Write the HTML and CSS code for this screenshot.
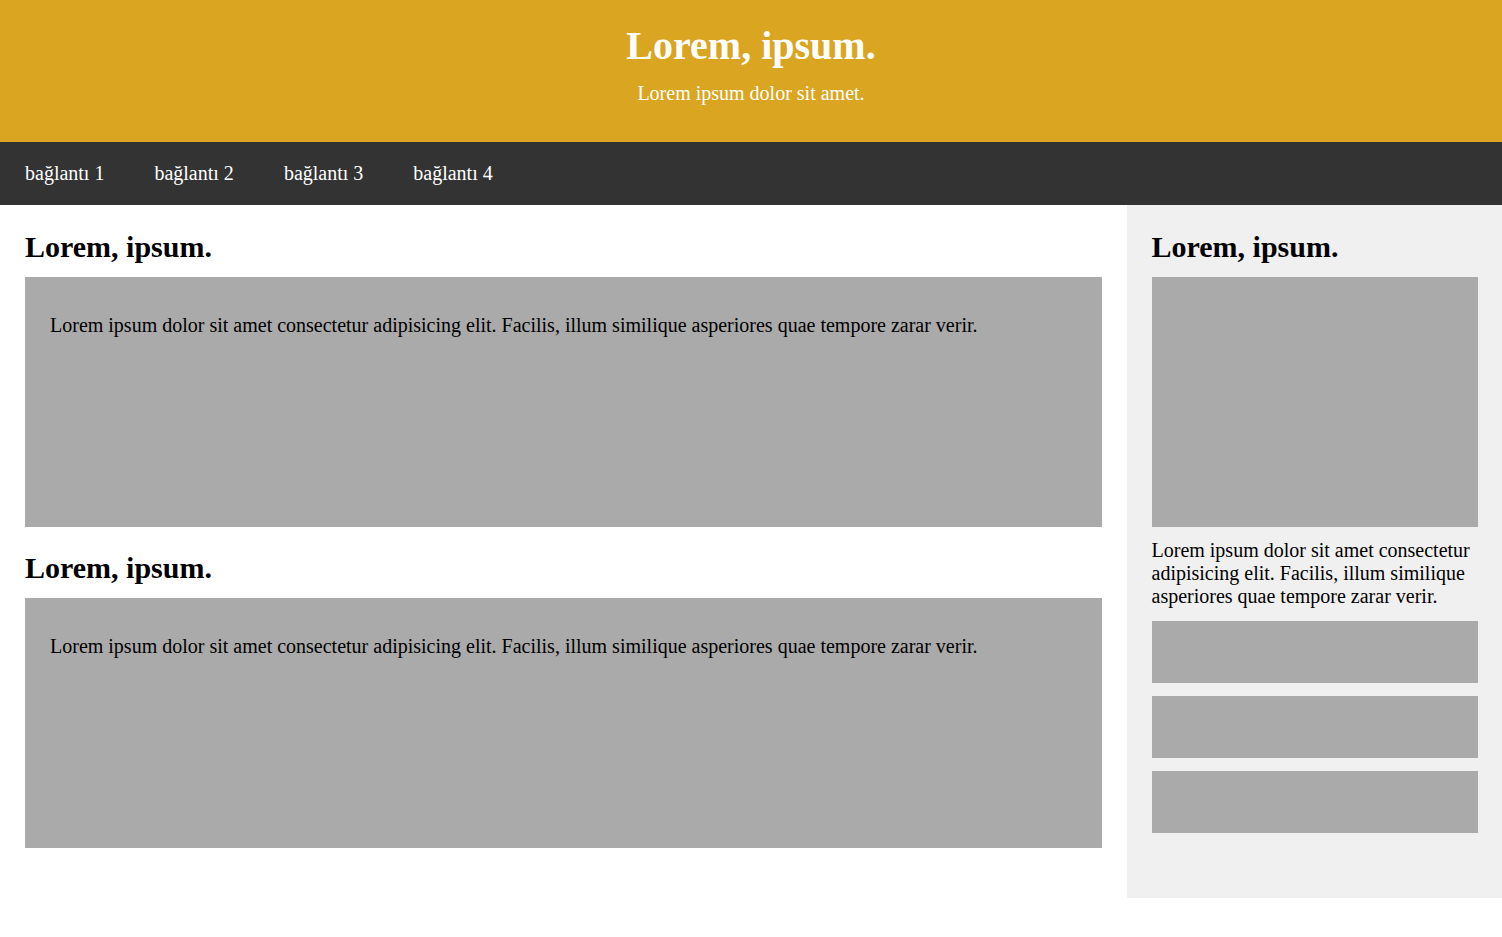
FILE: index.html
```html
<!DOCTYPE html>
<html lang="tr">
<head>
<meta charset="utf-8">
<title>Lorem, ipsum.</title>
<link rel="stylesheet" href="styles.css">
</head>
<body>
<header class="site-header">
  <h1 class="site-title">Lorem, ipsum.</h1>
  <p class="site-subtitle">Lorem ipsum dolor sit amet.</p>
</header>
<nav class="site-nav">
  <a href="#" class="nav-link">bağlantı 1</a>
  <a href="#" class="nav-link">bağlantı 2</a>
  <a href="#" class="nav-link">bağlantı 3</a>
  <a href="#" class="nav-link">bağlantı 4</a>
</nav>
<div class="layout">
  <main class="main-col">
    <section class="section">
      <h2 class="section-title">Lorem, ipsum.</h2>
      <div class="content-box">
        <p class="text">Lorem ipsum dolor sit amet consectetur adipisicing elit. Facilis, illum similique asperiores quae tempore zarar verir.</p>
      </div>
    </section>
    <section class="section">
      <h2 class="section-title">Lorem, ipsum.</h2>
      <div class="content-box">
        <p class="text">Lorem ipsum dolor sit amet consectetur adipisicing elit. Facilis, illum similique asperiores quae tempore zarar verir.</p>
      </div>
    </section>
  </main>
  <aside class="sidebar">
    <h2 class="section-title">Lorem, ipsum.</h2>
    <div class="side-image"></div>
    <p class="side-text">Lorem ipsum dolor sit amet consectetur adipisicing elit. Facilis, illum similique asperiores quae tempore zarar verir.</p>
    <div class="side-box"></div>
    <div class="side-box"></div>
    <div class="side-box"></div>
  </aside>
</div>
</body>
</html>
```
FILE: styles.css
```css
html {
  font-size: 20px;
}
body {
  margin: 0;
  font-family: "Liberation Serif", "Times New Roman", serif;
  font-size: 20px;
  color: #000;
  background: #fff;
}
.site-header {
  background: #daa520;
  color: #fff;
  text-align: center;
  padding: 22px 20px 37px;
}
.site-title {
  margin: 0;
  font-size: 40px;
  font-weight: bold;
}
.site-subtitle {
  margin: 13px 0 0;
  font-size: 20px;
}
.site-nav {
  background: #333;
  display: flex;
}
.nav-link {
  color: #fff;
  text-decoration: none;
  padding: 20px 25px;
  font-size: 20px;
}
.layout {
  display: grid;
  grid-template-columns: 3fr 1fr;
}
.main-col {
  padding: 0 25px 50px;
}
.section-title {
  margin: 25px 0 13px;
  font-size: 30px;
  font-weight: bold;
}
.section + .section .section-title {
  margin-top: 24px;
}
.content-box {
  background: #aaa;
  height: 250px;
  box-sizing: border-box;
  padding: 37px 25px;
}
.text {
  margin: 0;
}
.sidebar {
  background: #f0f0f0;
  padding: 0 24px 65px 25px;
}
.side-image {
  background: #aaa;
  height: 250px;
}
.side-text {
  margin: 12px 0 13px;
}
.side-box {
  background: #aaa;
  height: 62px;
  margin-bottom: 13px;
}
.side-box:last-child {
  margin-bottom: 0;
}
```
